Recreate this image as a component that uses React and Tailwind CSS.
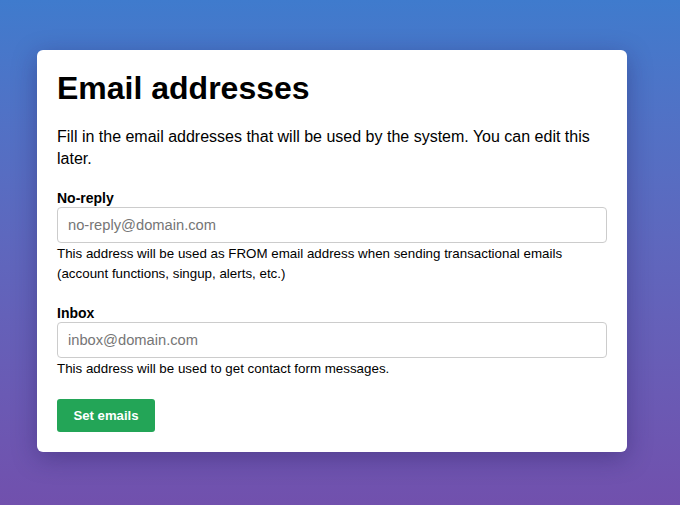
import React from 'react';

// Email addresses setup card on a blue → purple backdrop

const Field = ({ label, placeholder, help }) => (
  <div className="mb-5">
    <label className="block text-[14px] font-bold leading-[18px] text-black">{label}</label>
    <input
      type="email"
      placeholder={placeholder}
      className="block w-full h-[36px] px-[10px] text-[14.7px] text-black placeholder:text-[#767676] bg-white border border-[#cccccc] rounded-[4px] outline-none"
    />
    <p className="mt-px text-[13.35px] leading-5 text-black">{help}</p>
  </div>
);

export default function App() {
  return (
    <div
      className="min-h-[505px] w-full pt-[50px] pb-[54px] bg-gradient-to-b from-[#3f7bcd] to-[#7150ad]"
      style={{ fontFamily: '"Liberation Sans", Arial, Helvetica, sans-serif' }}
    >
      <div className="w-[590px] ml-[37px] bg-white rounded-[6px] p-5 shadow-[0_6px_24px_rgba(30,20,80,0.35)]">
        <h1 className="text-[32px] font-bold leading-9 text-black">Email addresses</h1>
        <p className="mt-5 mb-5 text-[16px] leading-[21.5px] text-black">
          Fill in the email addresses that will be used by the system. You can edit this later.
        </p>

        <Field
          label="No-reply"
          placeholder="no-reply@domain.com"
          help="This address will be used as FROM email address when sending transactional emails (account functions, singup, alerts, etc.)"
        />
        <Field
          label="Inbox"
          placeholder="inbox@domain.com"
          help="This address will be used to get contact form messages."
        />

        <button className="h-[33px] w-[98px] bg-[#23a557] text-white text-[13.2px] font-bold rounded-[3px]">
          Set emails
        </button>
      </div>
    </div>
  );
}
